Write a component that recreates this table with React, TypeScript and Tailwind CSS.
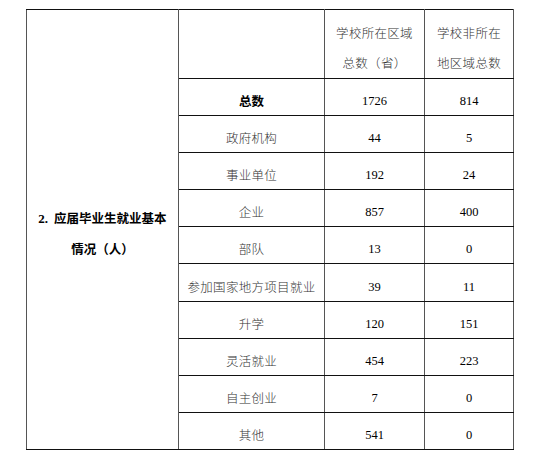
import React from "react";

const rows: [string, string, string][] = [
  ["总数", "1726", "814"],
  ["政府机构", "44", "5"],
  ["事业单位", "192", "24"],
  ["企业", "857", "400"],
  ["部队", "13", "0"],
  ["参加国家地方项目就业", "39", "11"],
  ["升学", "120", "151"],
  ["灵活就业", "454", "223"],
  ["自主创业", "7", "0"],
  ["其他", "541", "0"],
];

const cjk = { fontFamily: '"Noto Sans CJK SC", sans-serif' };
const num = { fontFamily: '"Liberation Serif", "Noto Sans CJK SC", serif' };

export default function App() {
  return (
    <div className="w-[538px] h-[459px] bg-white overflow-hidden">
      <table className="ml-[26px] mt-[9px] border-collapse table-fixed w-[487px]">
        <colgroup>
          <col className="w-[152px]" />
          <col className="w-[146px]" />
          <col className="w-[100px]" />
          <col className="w-[89px]" />
        </colgroup>
        <tbody>
          <tr className="h-[67.5px]">
            <td
              rowSpan={11}
              className="border-y border-y-[#111] border-x border-x-[#555] text-center align-middle pt-[9px] text-[12.5px] leading-[30px] font-bold text-black"
              style={cjk}
            >
              <span style={num} className="font-bold text-[13px] mr-[6px]">2.</span>应届毕业生就业基本
              <br />
              情况（人）
            </td>
            <td className="border-y border-y-[#111] border-x border-x-[#555]"></td>
            <td
              className="border-y border-y-[#111] border-x border-x-[#555] text-center align-middle pt-[8px] text-[12.5px] leading-[30px] text-[#333] font-light tracking-[0.3px]"
              style={cjk}
            >
              学校所在区域
              <br />
              总数（省）
            </td>
            <td
              className="border-y border-y-[#111] border-x border-x-[#555] text-center align-middle pt-[8px] text-[12.5px] leading-[30px] text-[#333] font-light tracking-[0.3px]"
              style={cjk}
            >
              学校非所在
              <br />
              地区域总数
            </td>
          </tr>
          {rows.map(([label, a, b], i) => (
            <tr key={label} className="h-[37.1px]">
              <td
                className={
                  i === 0
                    ? "border-y border-y-[#111] border-x border-x-[#555] text-center align-middle pt-[8px] text-[12.5px] leading-[20px] font-bold text-black"
                    : "border-y border-y-[#111] border-x border-x-[#555] text-center align-middle pt-[8px] text-[12.5px] leading-[20px] font-light text-[#333] tracking-[0.3px]"
                }
                style={cjk}
              >
                {label}
              </td>
              <td
                className="border-y border-y-[#111] border-x border-x-[#555] text-center align-middle pt-[8px] text-[12.5px] leading-[20px] text-black"
                style={num}
              >
                {a}
              </td>
              <td
                className="border-y border-y-[#111] border-x border-x-[#555] text-center align-middle pt-[8px] text-[12.5px] leading-[20px] text-black"
                style={num}
              >
                {b}
              </td>
            </tr>
          ))}
        </tbody>
      </table>
    </div>
  );
}
